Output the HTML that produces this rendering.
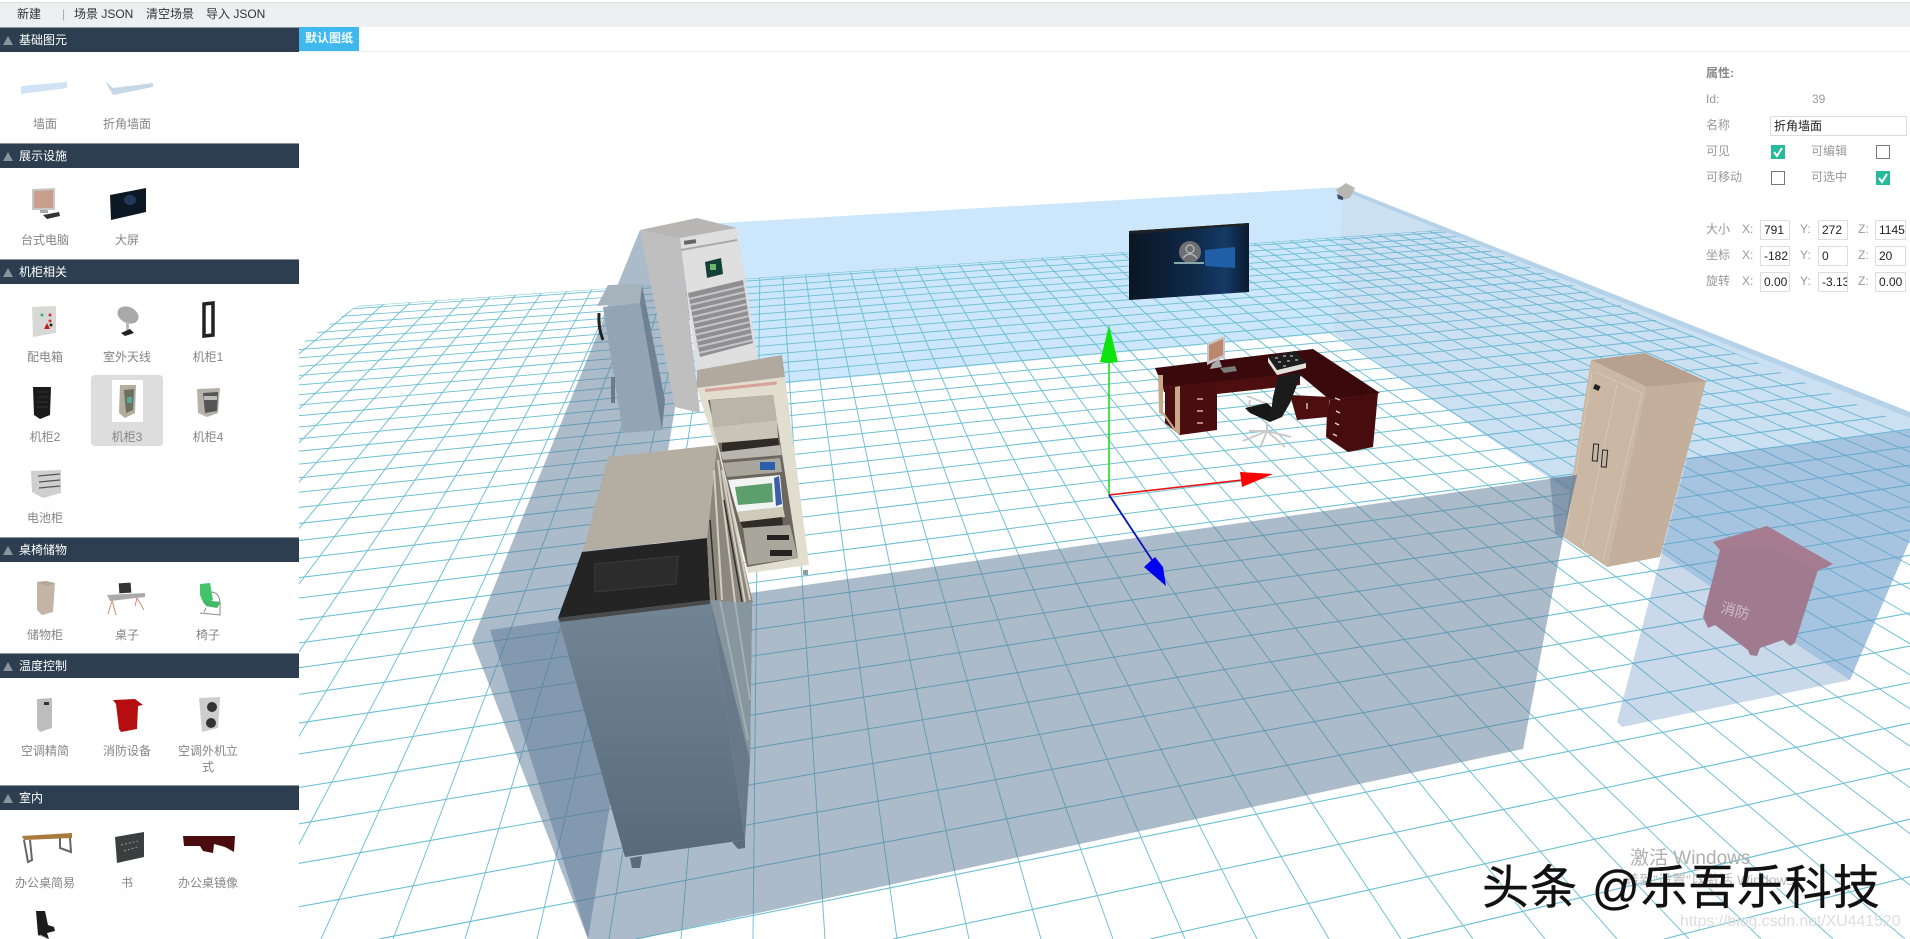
<!DOCTYPE html>
<html lang="zh"><head><meta charset="utf-8"><title>3D</title>
<style>
html,body{margin:0;padding:0;background:#fff;width:1910px;height:939px;overflow:hidden}
body{position:relative;font-family:"Liberation Sans","Noto Sans CJK SC",sans-serif;font-size:12px;color:#777}
svg{position:absolute;left:0;top:0}
.t{position:absolute;white-space:nowrap;line-height:16px}
#side{position:absolute;left:0;top:27px;width:299px;height:912px;background:#fff}
.h{position:absolute;left:0;width:299px;height:24px;background:#2c3e50;border-top:1px solid #8a949c;color:#fff;line-height:24px;text-indent:19px}
.h:before{content:"";position:absolute;left:3px;top:8px;border:5px solid transparent;border-top:0;border-bottom:9px solid #8b949b}
.l{position:absolute;width:82px;text-align:center;color:#858585;line-height:16px}
.v{color:#999}
.b{position:absolute;border:1px solid #ddd;background:#fff;color:#222;height:18px;line-height:19px;padding-left:3px;overflow:hidden;white-space:nowrap;box-sizing:content-box}
.c{position:absolute;width:12px;height:12px;border:1px solid #777;background:#fff}
.k{position:absolute;width:14px;height:14px;background:#26b99a}
.k svg{position:absolute;left:0;top:0}
</style></head><body>
<svg id="scene" width="1910" height="939" viewBox="0 0 1910 939">
<defs>
<clipPath id="gc"><polygon points="357,306 1441,230 2400,632 2400,939 -588,939"/></clipPath>
<linearGradient id="mon" x1="0" y1="0" x2="1" y2="0"><stop offset="0" stop-color="#0b1622"/><stop offset=".55" stop-color="#10294a"/><stop offset=".8" stop-color="#143a66"/><stop offset="1" stop-color="#0b1a2c"/></linearGradient>
<linearGradient id="low" x1="0" y1="0" x2="0" y2="1"><stop offset="0" stop-color="#728594"/><stop offset="1" stop-color="#586b7b"/></linearGradient>
</defs>
<polygon points="705,224 1344,187 1333,333 800,382 690,393" fill="#cce6fb"/>
<g id="grid" clip-path="url(#gc)" stroke="#6cbfd2" stroke-width=".95" fill="none"><line x1="357" y1="306" x2="1441" y2="230"/></g>
<polygon points="1344,187 1910,412 1910,540 1850,680 1333,333" fill="rgba(110,170,215,.36)"/>
<polygon points="1344,187 1910,412 1910,418 1344,191" fill="rgba(110,160,200,.22)"/>
<polygon points="1687,458 1910,430 1910,540 1850,680 1622,727 1617,722" fill="rgba(90,140,190,.33)"/>
<!-- brown cabinet -->
<polygon points="1591,360 1645,353 1706,381 1647,387" fill="#b8a08e"/>
<polygon points="1591,360 1647,387 1607,567 1563,537" fill="#cab7a4"/>
<polygon points="1647,387 1706,381 1660,557 1607,567" fill="#c4ae9c"/>
<path d="M1596 372 L1642 393 L1603 560 M1617 385 L1583 546 M1592 372 L1566 533" stroke="#d9ccbc" stroke-width=".8" fill="none"/>
<rect x="1593" y="444" width="5" height="17" fill="#c4b5a5" stroke="#222" stroke-width="1" transform="rotate(5 1595 452)"/>
<rect x="1602" y="450" width="5" height="17" fill="#c4b5a5" stroke="#222" stroke-width="1" transform="rotate(5 1604 458)"/>
<rect x="1594" y="385" width="6" height="5" fill="#222" transform="rotate(25 1597 387)"/>
<!-- walls left & front -->
<polygon points="640,230 705,225 588,939 472,641" fill="rgba(90,120,150,.5)"/>
<polygon points="490,630 1577,475 1563,537 1523,749 637,939 588,939" fill="rgba(90,120,150,.5)"/>
<polygon points="1550,478 1577,475 1563,537 1555,533" fill="rgba(100,125,150,.55)"/>
<!-- fire box -->
<polygon points="1713,542 1767,526 1833,564 1825,568 1818,570 1795,643 1790,646 1783,640 1760,648 1757,656 1750,655 1748,650 1715,625 1708,628 1703,617 1720,550" fill="#a07b8f"/>
<polygon points="1713,542 1767,526 1833,564 1818,570 1770,548 1720,550" fill="#a67d90"/>
<text x="1720" y="612" transform="rotate(15 1720 612)" font-size="14.5" fill="#cfbcc8" font-family="Liberation Sans,Noto Sans CJK SC,sans-serif">消防</text>
<!-- small AC -->
<polygon points="597,306 608,285 642,284 640,303" fill="#a6b2bc"/>
<polygon points="603,307 640,303 662,430 623,433" fill="#93a5b5"/>
<polygon points="642,285 665,400 662,430 640,303" fill="#6f8294"/>
<path d="M599 313 Q598 328 603 340" fill="none" stroke="#222" stroke-width="3"/>
<rect x="611" y="377" width="4" height="26" fill="#6a7c8c"/>
<!-- big AC -->
<polygon points="640,230 697,218 737,228 680,238" fill="#b7b6b5"/>
<polygon points="640,230 680,238 700,413 675,407" fill="#c0bfc0"/>
<polygon points="680,238 737,228 758,360 700,400" fill="#dfdfe0"/>
<polygon points="681,249 737,239 737,241 681,251" fill="#a9a9ab"/>
<rect x="684" y="240" width="12" height="4" fill="#666" transform="rotate(-8 690 242)"/>
<polygon points="705,262 721,258 723,274 707,278" fill="#123f38"/>
<rect x="710" y="264" width="6" height="6" fill="#6cb56a"/>
<polygon points="688,293 743,280 753,343 700,357" fill="#8f8f92"/>
<path d="M689 299 L744 286 M690 305 L745 292 M691 311 L746 298 M692 317 L747 304 M693 323 L748 310 M694 329 L749 316 M695 335 L750 322 M696 341 L751 328 M697 347 L752 334 M699 353 L753 340" stroke="#c4c4c6" stroke-width="2" fill="none"/>
<!-- rack 3 -->
<polygon points="697,370 782,355 785,377 697,388" fill="#b1a99d"/>
<polygon points="697,388 785,377 809,565 748,573 715,445" fill="#e2decf"/>
<polygon points="708,400 773,395 798,558 747,567" fill="#6b675e"/>
<rect x="705" y="389" width="72" height="3" fill="#c66" opacity=".5" transform="rotate(-6 705 389)"/>
<polygon points="710,400 773,395 777,420 713,427" fill="#b9b5a8"/>
<polygon points="713,427 777,420 778,438 717,443" fill="#c8c4b7"/>
<polygon points="722,443 778,438 780,450 722,452" fill="#2e2b27"/>
<polygon points="720,452 780,445 782,455 723,460" fill="#b8b6ae"/>
<polygon points="723,463 780,458 782,472 727,477" fill="#a9a69e"/>
<rect x="760" y="462" width="15" height="8" fill="#2a5fb0"/>
<polygon points="728,480 780,475 783,507 737,512" fill="#f2f3f3"/>
<polygon points="735,487 772,483 773,502 738,505" fill="#5c9f6c"/>
<polygon points="774,478 779,476 782,504 776,506" fill="#3a5ea8"/>
<polygon points="737,512 783,507 785,517 740,522" fill="#cfcbb9"/>
<polygon points="740,522 782,517 783,525 743,528" fill="#2f2c28"/>
<polygon points="743,528 790,525 798,558 748,565" fill="#a9a69c"/>
<rect x="767" y="535" width="22" height="5" fill="#222"/>
<rect x="770" y="550" width="22" height="6" fill="#222"/>
<rect x="803" y="570" width="5" height="5" fill="#999"/>
<!-- big cabinet -->
<polygon points="583,551 608,457 717,445 707,538" fill="#b3ada2"/>
<polygon points="558,618 710,600 745,840 625,857" fill="url(#low)"/>
<polygon points="710,600 752,603 750,760 745,840" fill="#69798a"/>
<polygon points="710,600 752,603 750,760 728,670" fill="#87959f"/>
<path d="M720 600 L748 740 M735 602 L750 700" stroke="#a3aeb5" stroke-width="2" fill="none"/>
<polygon points="630,858 642,856 640,868 632,868" fill="#5a6b79"/>
<polygon points="732,842 745,840 745,848 738,849" fill="#5a6b79"/>
<polygon points="582,552 707,538 710,600 558,618" fill="#242424"/>
<polygon points="595,564 678,556 676,584 595,592" fill="#2c2c2c" stroke="#3c3c3c"/>
<polygon points="558,618 710,600 710,604 560,622" fill="#4a4a4a"/>
<polygon points="717,445 753,603 710,600 707,538" fill="#8b877d"/>
<path d="M714 470 L722 600 M718 460 L735 602 M722 470 L745 602 M726 480 L750 600" stroke="#d2cdbf" stroke-width="2" fill="none"/>
<path d="M710 520 L716 600 M724 500 L742 602" stroke="#2f2f2f" stroke-width="1.5" fill="none"/>
<!-- screen -->
<polygon points="1129,231 1249,223 1249,292 1129,300" fill="url(#mon)"/>
<polygon points="1129,231 1249,223 1249,225 1129,234" fill="#222"/>
<circle cx="1190" cy="252" r="11" fill="#6d6f72"/>
<circle cx="1190" cy="249" r="4" fill="none" stroke="#ccc" stroke-width="1"/>
<path d="M1183 258 Q1190 250 1197 258" fill="none" stroke="#ccc"/>
<rect x="1174" y="262" width="30" height="2" fill="#8aa"/>
<polygon points="1205,250 1235,247 1235,268 1205,266" fill="#1f5fa8"/>
<!-- desk -->
<polygon points="1155,368 1313,349 1380,393 1330,400 1300,375 1163,387" fill="#3a090b"/>
<polygon points="1163,387 1300,373 1300,385 1217,394 1164,392" fill="#4d0e10"/>
<polygon points="1165,387 1217,382 1217,430 1180,435 1165,423" fill="#4a0d0f"/>
<polygon points="1290,395 1330,397 1327,417 1297,420" fill="#4d0e10"/>
<polygon points="1330,400 1378,393 1373,447 1348,452 1326,437 1327,413" fill="#470c0e"/>
<polygon points="1158,375 1163,375 1163,415 1159,413" fill="#c9a98a"/>
<polygon points="1175,387 1180,386 1180,434 1175,432" fill="#c9a98a"/>
<path d="M1163 413 L1175 430" stroke="#c9a98a" stroke-width="2"/>
<path d="M1197 399 h6 M1197 411 h6 M1197 423 h6 M1335 398 l5 2 M1336 411 l4 2 M1335 423 l4 2 M1333 434 l4 2 M1308 384 v5 M1307 403 v6" stroke="#e8d8c8" stroke-width="1.3"/>
<!-- chair -->
<path d="M1267 422 V431 M1267 431 L1243 441 M1267 431 L1260 448 M1267 431 L1285 447 M1267 431 L1291 437 M1267 431 L1249 431" stroke="#c9c9c9" stroke-width="2" fill="none"/>
<path d="M1247 396 L1270 405 M1250 400 L1248 412" stroke="#ccc" stroke-width="2" fill="none"/>
<polygon points="1245,408 1267,403 1282,417 1270,422 1250,413" fill="#171717"/>
<polygon points="1278,377 1302,372 1290,403 1282,417 1270,420 1273,397" fill="#1b1b1b"/>
<!-- pc and book -->
<polygon points="1207,343 1225,336 1225,357 1207,365" fill="#c8c6c6"/>
<polygon points="1209,345 1223,339 1223,355 1209,361" fill="#b9886f"/>
<polygon points="1212,364 1219,359 1222,367 1210,369" fill="#aaa"/>
<polygon points="1220,368 1235,366 1237,371 1224,373" fill="#7a7a7a"/>
<polygon points="1268,357 1277,370 1306,363 1306,368 1277,375 1268,362" fill="#e2e2da"/>
<polygon points="1268,357 1295,351 1306,363 1277,370" fill="#1e1e1e"/>
<path d="M1275 358 h3 M1283 356 h3 M1290 356 h3 M1278 362 h3 M1287 361 h3 M1295 360 h3 M1283 366 h3" stroke="#bbb" stroke-width="1.2"/>
<!-- axes -->
<line x1="1109" y1="495" x2="1109" y2="360" stroke="#1bdc1b" stroke-width="1.6"/>
<polygon points="1109,325 1118,362 1109,363 1100,362" fill="#0de30d"/>
<line x1="1109" y1="495" x2="1242" y2="480" stroke="#e81212" stroke-width="1.6"/>
<polygon points="1240,472 1273,474 1242,487" fill="#f00"/>
<line x1="1109" y1="495" x2="1152" y2="560" stroke="#0808bb" stroke-width="1.6"/>
<polygon points="1155,557 1163,567 1166,586 1144,567" fill="#0000f0"/>
<!-- camera -->
<polygon points="1336,190 1346,183 1355,188 1350,198 1342,200" fill="#b9b7b2"/>
<polygon points="1337,194 1343,197 1343,200 1338,199" fill="#3c4a73"/>
</svg>
<script>
(function(){var g=document.getElementById('grid'),n='http://www.w3.org/2000/svg',k,t,l,w;
function add(a,b,c,d,sw){l=document.createElementNS(n,'line');l.setAttribute('x1',a);l.setAttribute('y1',b);l.setAttribute('x2',c);l.setAttribute('y2',d);if(sw)l.setAttribute('stroke-width',sw);g.appendChild(l);}
for(k=-16;k<=40;k++){t=753+72*k;
  var x0=763+(t-763)*(135)/974,x1=t;
  add(x0,100,x1,939);}
for(k=-34;k<=7;k++){t=122+257*k;w=0.85+0.3*(k+34)/41;
  var xa=250,ya=-60+999*(5600-xa)/(5600-t),xb=1910,yb=-60+999*(5600-xb)/(5600-t);
  if(ya>939){xa=t;ya=939;}
  if(yb>939)continue;
  add(xa,ya,xb,yb,w);}
})();
</script>

<!-- top bar -->
<div style="position:absolute;left:0;top:0;width:1910px;height:27px;background:#ecf0f1;border-top:2px solid #fff;box-sizing:border-box"><div style="height:1px;background:#d9dddf"></div></div>
<div class="t" style="left:17px;top:6px;color:#333">新建</div>
<div class="t" style="left:62px;top:6px;color:#aaa">|</div>
<div class="t" style="left:74px;top:6px;color:#333">场景 JSON</div>
<div class="t" style="left:146px;top:6px;color:#333">清空场景</div>
<div class="t" style="left:206px;top:6px;color:#333">导入 JSON</div>
<div style="position:absolute;left:299px;top:27px;width:1611px;height:24px;border-bottom:1px solid #eee;background:#fff"></div>
<div style="position:absolute;left:299px;top:27px;width:60px;height:24px;background:#3fb8ee;color:#f3fbff;font-weight:bold;line-height:22px;text-align:center">默认图纸</div>

<!-- sidebar -->
<div id="side"></div>
<div class="h" style="top:27px">基础图元</div>
<div class="h" style="top:143px">展示设施</div>
<div class="h" style="top:259px">机柜相关</div>
<div class="h" style="top:537px">桌椅储物</div>
<div class="h" style="top:653px">温度控制</div>
<div class="h" style="top:785px">室内</div>
<div style="position:absolute;left:91px;top:375px;width:72px;height:71px;background:#ddd;border-radius:4px"></div>
<div style="position:absolute;left:112px;top:380px;width:31px;height:42px;background:#fff"></div>

<svg width="300" height="939" viewBox="0 0 300 939" style="z-index:2">
<polygon points="21,86 67,82 67,88 21,94" fill="#cfe3f4"/>
<polygon points="105,81 113,88 153,83 153,87 113,95" fill="#c6d8e8"/>
<polygon points="32,189 55,188 55,210 32,210" fill="#c8c6c6"/><polygon points="34,191 53,190 53,208 34,208" fill="#c99e8a"/><rect x="40" y="210" width="8" height="3" fill="#aaa"/><polygon points="43,215 59,212 60,216 47,219" fill="#333"/>
<polygon points="110,195 146,188 146,212 111,220" fill="#0d1825"/><ellipse cx="130" cy="200" rx="6" ry="5" fill="#24395a"/>
<polygon points="32,307 56,306 56,333 33,337" fill="#d8d8d6"/><circle cx="42" cy="315" r="1.5" fill="#3a7"/><circle cx="50" cy="315" r="1.5" fill="#c33"/><circle cx="50" cy="321" r="1.5" fill="#c33"/><polygon points="47,323 50,329 44,329" fill="#b22"/><circle cx="51" cy="325" r="1.5" fill="#222"/>
<ellipse cx="128" cy="315" rx="11" ry="8" fill="#a9a9a9" transform="rotate(25 128 315)"/><rect x="126" y="322" width="3" height="10" fill="#bbb"/><polygon points="121,333 130,329 134,333 125,336" fill="#222"/>
<path d="M204 304 L213 303 L213 335 L204 336 Z" fill="#fff" stroke="#222" stroke-width="3.5"/>
<polygon points="33,387 51,387 50,415 40,419 34,415" fill="#1a1a1a"/><path d="M37 392h11M37 397h11M37 402h11M37 407h11" stroke="#333"/>
<polygon points="120,385 136,385 135,413 125,418 119,413" fill="#b5ad9b"/><polygon points="124,390 134,389 133,410 126,413" fill="#6b6f62"/><rect x="127" y="397" width="5" height="6" fill="#5a9"/>
<polygon points="197,389 220,388 218,413 207,417 198,413" fill="#b7b2a8"/><polygon points="203,393 218,392 217,411 205,413" fill="#555"/><rect x="204" y="396" width="13" height="4" fill="#bbb"/>
<polygon points="31,471 61,470 61,493 43,498 32,492" fill="#cfcfcf"/><path d="M38 476 L60 474 M39 482 L60 480 M39 488 L60 486" stroke="#555" stroke-width="1.2"/>
<polygon points="37,582 55,583 53,612 42,615 37,610" fill="#c3b4a5"/><polygon points="37,582 46,581 55,583 46,586" fill="#b5a596"/>
<rect x="119" y="583" width="12" height="10" fill="#333" transform="rotate(-4 125 588)"/><polygon points="107,595 145,593 145,597 110,601" fill="#aaa"/><path d="M112 601 L108 614 M112 600 L116 615 M137 598 L144 610 M137 598 L135 606" stroke="#cf8d77" stroke-width="1"/>
<polygon points="200,584 210,583 213,600 204,604 200,595" fill="#43c46b"/><polygon points="203,600 221,602 217,608 206,606" fill="#3fb966"/><path d="M211 592 Q221 592 220 608 V615 L200 613 M206 608 L204 612" fill="none" stroke="#888" stroke-width="1"/>
<polygon points="37,699 52,698 52,728 40,732 37,728" fill="#bdbdbd"/><rect x="44" y="702" width="5" height="3" fill="#333"/>
<polygon points="113,700 135,699 143,705 138,706 137,729 121,732 119,729 116,704" fill="#b50d10"/>
<polygon points="199,698 220,697 218,728 202,732" fill="#cdcdcd"/><circle cx="212" cy="707" r="5" fill="#333"/><circle cx="211" cy="723" r="5" fill="#333"/>
<polygon points="22,836 72,833 72,838 24,840" fill="#a87a3c"/><path d="M24 840 L28 862 L32 860 L30 840 M60 838 L60 848 L71 852 L70 838" fill="none" stroke="#666" stroke-width="2"/>
<polygon points="115,837 144,832 144,857 117,863" fill="#3a3f3f"/><path d="M121 845 L138 841 M124 851 L137 847" stroke="#999" stroke-dasharray="2 2"/>
<polygon points="183,836 235,836 234,852 225,847 214,844 213,853 203,851 200,846 189,846 184,846" fill="#4a0c0e"/>
<polygon points="36,911 45,911 48,925 54,927 55,931 47,933 49,939 38,935" fill="#1c1c1c"/><path d="M40 935 L48 939" stroke="#aaa"/>
</svg>

<div style="position:absolute;left:0;top:0;z-index:3">
<div class="l" style="left:4px;top:116px">墙面</div><div class="l" style="left:86px;top:116px">折角墙面</div>
<div class="l" style="left:4px;top:232px">台式电脑</div><div class="l" style="left:86px;top:232px">大屏</div>
<div class="l" style="left:4px;top:349px">配电箱</div><div class="l" style="left:86px;top:349px">室外天线</div><div class="l" style="left:167px;top:349px">机柜1</div>
<div class="l" style="left:4px;top:429px">机柜2</div><div class="l" style="left:86px;top:429px">机柜3</div><div class="l" style="left:167px;top:429px">机柜4</div>
<div class="l" style="left:4px;top:510px">电池柜</div>
<div class="l" style="left:4px;top:627px">储物柜</div><div class="l" style="left:86px;top:627px">桌子</div><div class="l" style="left:167px;top:627px">椅子</div>
<div class="l" style="left:4px;top:743px">空调精简</div><div class="l" style="left:86px;top:743px">消防设备</div><div class="l" style="left:167px;top:743px;width:82px">空调外机立<br>式</div>
<div class="l" style="left:4px;top:875px">办公桌简易</div><div class="l" style="left:86px;top:875px">书</div><div class="l" style="left:167px;top:875px">办公桌镜像</div>
</div>

<!-- property panel -->
<div class="t" style="left:1706px;top:65px;color:#888;font-weight:bold">属性:</div>
<div class="t v" style="left:1706px;top:91px">Id:</div><div class="t v" style="left:1812px;top:91px">39</div>
<div class="t v" style="left:1706px;top:117px">名称</div>
<div class="b" style="left:1770px;top:116px;width:132px">折角墙面</div>
<div class="t v" style="left:1706px;top:143px">可见</div>
<div class="k" style="left:1771px;top:145px"><svg width="14" height="14"><path d="M3 7 L6 11 L11 3" fill="none" stroke="#fff" stroke-width="2"/></svg></div>
<div class="t v" style="left:1811px;top:143px">可编辑</div><div class="c" style="left:1876px;top:145px"></div>
<div class="t v" style="left:1706px;top:169px">可移动</div><div class="c" style="left:1771px;top:171px"></div>
<div class="t v" style="left:1811px;top:169px">可选中</div>
<div class="k" style="left:1876px;top:171px"><svg width="14" height="14"><path d="M3 7 L6 11 L11 3" fill="none" stroke="#fff" stroke-width="2"/></svg></div>

<div class="t v" style="left:1706px;top:221px">大小</div><div class="t v" style="left:1742px;top:221px">X:</div><div class="b" style="left:1760px;top:220px;width:25px">791</div><div class="t v" style="left:1800px;top:221px">Y:</div><div class="b" style="left:1818px;top:220px;width:25px">272</div><div class="t v" style="left:1858px;top:221px">Z:</div><div class="b" style="left:1875px;top:220px;width:26px">1145</div>
<div class="t v" style="left:1706px;top:247px">坐标</div><div class="t v" style="left:1742px;top:247px">X:</div><div class="b" style="left:1760px;top:246px;width:25px">-182</div><div class="t v" style="left:1800px;top:247px">Y:</div><div class="b" style="left:1818px;top:246px;width:25px">0</div><div class="t v" style="left:1858px;top:247px">Z:</div><div class="b" style="left:1875px;top:246px;width:26px">20</div>
<div class="t v" style="left:1706px;top:273px">旋转</div><div class="t v" style="left:1742px;top:273px">X:</div><div class="b" style="left:1760px;top:272px;width:25px">0.00</div><div class="t v" style="left:1800px;top:273px">Y:</div><div class="b" style="left:1818px;top:272px;width:25px">-3.13</div><div class="t v" style="left:1858px;top:273px">Z:</div><div class="b" style="left:1875px;top:272px;width:26px">0.00</div>

<!-- watermarks -->
<div class="t" style="left:1630px;top:848px;font-size:19px;line-height:22px;color:#b0b0b0">激活 Windows</div>
<div class="t" style="left:1625px;top:872px;font-size:14px;color:#bbb">转到"设置"以激活 Windows。</div>
<div class="t" style="left:1680px;top:914px;font-size:15.8px;color:#ddd">https://blog.csdn.net/XU441520</div>
<div class="t" style="left:1482px;top:860px;font-size:47px;line-height:56px;letter-spacing:1px;color:#111;-webkit-text-stroke:.4px #111;text-shadow:0 1px 0 #fff">头条 @乐吾乐科技</div>
</body></html>
